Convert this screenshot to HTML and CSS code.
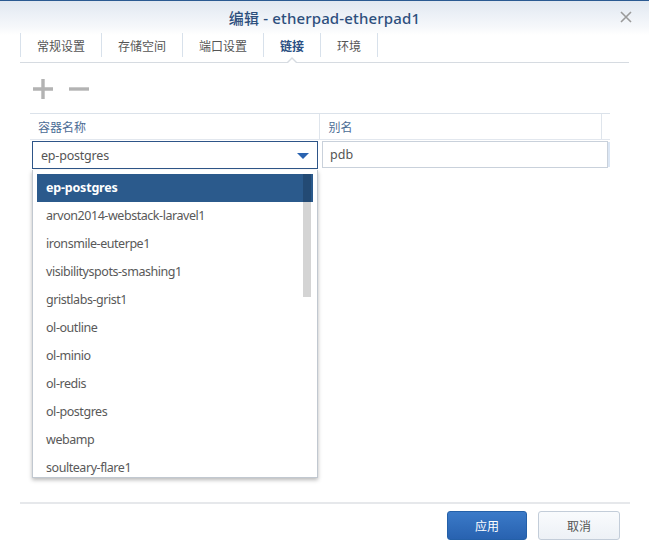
FILE: index.html
```html
<!DOCTYPE html>
<html lang="zh">
<head>
<meta charset="utf-8">
<title>编辑 - etherpad-etherpad1</title>
<link rel="stylesheet" href="styles.css">
</head>
<body>
<div class="window">
  <div class="header">
    <div class="title">编辑 - etherpad-etherpad1</div>
    <div class="close" aria-label="关闭">
      <svg width="12" height="12" viewBox="0 0 12 12"><path d="M1 1 L11 11 M11 1 L1 11" stroke="#9a9a9a" stroke-width="1.6" fill="none"/></svg>
    </div>
  </div>
  <div class="tabs">
    <div class="tab">常规设置</div>
    <div class="tab">存储空间</div>
    <div class="tab">端口设置</div>
    <div class="tab active">链接</div>
    <div class="tab">环境</div>
  </div>
  <div class="content">
    <div class="toolbar">
      <span class="tool">
        <svg width="20" height="20" viewBox="0 0 20 20"><path d="M10 0 V20 M0 10 H20" stroke="#b3b3b3" stroke-width="3.4" fill="none"/></svg>
      </span>
      <span class="tool">
        <svg width="20" height="20" viewBox="0 0 20 20"><path d="M0 10 H20" stroke="#b3b3b3" stroke-width="3.4" fill="none"/></svg>
      </span>
    </div>
    <div class="grid">
      <div class="grid-head">
        <div class="hcell c1">容器名称</div>
        <div class="hcell c2">别名</div>
        <div class="hcell c3"></div>
      </div>
      <div class="grid-row">
        <div class="cell c1">
          <div class="combo">
            <span class="combo-text">ep-postgres</span>
            <span class="combo-arrow"></span>
          </div>
          <div class="dropdown">
            <div class="item selected">ep-postgres</div>
            <div class="item">arvon2014-webstack-laravel1</div>
            <div class="item">ironsmile-euterpe1</div>
            <div class="item">visibilityspots-smashing1</div>
            <div class="item">gristlabs-grist1</div>
            <div class="item">ol-outline</div>
            <div class="item">ol-minio</div>
            <div class="item">ol-redis</div>
            <div class="item">ol-postgres</div>
            <div class="item">webamp</div>
            <div class="item">soulteary-flare1</div>
            <div class="scrollbar"></div>
          </div>
        </div>
        <div class="cell c2">
          <div class="textbox">pdb</div>
        </div>
      </div>
    </div>
  </div>
  <div class="footer">
    <button class="btn primary">应用</button>
    <button class="btn">取消</button>
  </div>
</div>
</body>
</html>
```

FILE: styles.css
```css
* { box-sizing: border-box; }
html, body {
  margin: 0;
  padding: 0;
  background: #ffffff;
}
body {
  font-family: "Noto Sans", "Noto Sans CJK SC", sans-serif;
  font-size: 12px;
  color: #505050;
}
.window {
  width: 649px;
  height: 547px;
  border-top: 1px solid #2b5a92;
  background: linear-gradient(#e1e8f1 0px, #f6f8fb 26px, #ffffff 34px, #ffffff 100%);
  display: flex;
  flex-direction: column;
}
.header {
  height: 32px;
  display: flex;
  align-items: center;
  justify-content: center;
  position: relative;
}
.title {
  font-size: 15px;
  font-weight: 500;
  color: #2d4f7d;
  padding-top: 1px;
  letter-spacing: 0.15px;
}
.close {
  position: absolute;
  right: 17px;
  top: 10px;
  width: 12px;
  height: 12px;
  display: flex;
}
.tabs {
  margin: 0 20px 0 20px;
  height: 30px;
  border-bottom: 1px solid #d6dbe1;
  display: flex;
  align-items: flex-start;
  position: relative;
}
.tab {
  height: 24px;
  line-height: 24px;
  padding: 2px 16px 0 16px;
  border-right: 1px solid #d8e1eb;
  color: #555555;
  font-size: 12px;
}
.tab:first-child { border-left: 1px solid #d8e1eb; padding-left: 16px; }
.tab.active {
  color: #2b5083;
  font-weight: 700;
  position: relative;
}
.tab.active::before {
  content: "";
  position: absolute;
  left: 50%;
  bottom: -6px;
  margin-left: -6px;
  border-left: 6px solid transparent;
  border-right: 6px solid transparent;
  border-bottom: 6px solid #d6dbe1;
}
.tab.active::after {
  content: "";
  position: absolute;
  left: 50%;
  bottom: -7px;
  margin-left: -5px;
  border-left: 5px solid transparent;
  border-right: 5px solid transparent;
  border-bottom: 5px solid #ffffff;
}
.content {
  flex: 1;
  padding: 0 29px 0 30px;
}
.toolbar {
  height: 50px;
  display: flex;
  align-items: center;
  gap: 16px;
  padding-left: 3px;
  padding-top: 1px;
}
.tool { display: flex; width: 20px; height: 20px; }
.grid { width: 590px; }
.grid-head {
  display: flex;
  height: 27px;
  border-top: 1px solid #dbe2ea;
  border-bottom: 1px solid #e2e7ee;
  width: 580px;
}
.grid-head .c3 { flex: 1; border-right: none; }
.hcell {
  line-height: 26px;
  padding-left: 8px;
  padding-top: 1px;
  color: #4c6c95;
  border-right: 1px solid #dfe5ec;
}
.hcell.c1 { width: 291px; }
.hcell.c2 { width: 282px; }
.grid-row {
  display: flex;
  padding-top: 1px;
}
.cell.c1 {
  width: 291px;
  padding-left: 2px;
  position: relative;
}
.cell.c2 {
  width: 288px;
  padding-left: 1px;
}
.combo {
  width: 286px;
  height: 28px;
  border: 1px solid #2e5588;
  display: flex;
  align-items: center;
  justify-content: space-between;
  padding: 0 8px 0 8px;
  background: #fff;
}
.combo-text { color: #555; font-size: 12.5px; letter-spacing: -0.2px; }
.combo-arrow {
  width: 0;
  height: 0;
  border-left: 6px solid transparent;
  border-right: 6px solid transparent;
  border-top: 6px solid #2a63b0;
  margin-top: 2px;
}
.textbox {
  width: 286px;
  height: 27px;
  border: 1px solid #c9d1db;
  box-shadow: 3px 0 0 -1px #dbe6f4;
  padding-left: 7px;
  line-height: 25px;
  font-size: 12.5px;
  color: #555;
  background: #fff;
}
.dropdown {
  position: absolute;
  left: 2px;
  top: 29px;
  width: 286px;
  height: 308px;
  background: #fff;
  border: 1px solid #c1c8d0;
  border-top: none;
  box-shadow: 0 2px 4px rgba(0, 0, 0, 0.28);
  padding: 4px 4px 0 4px;
  overflow: hidden;
  z-index: 5;
}
.item {
  height: 28px;
  line-height: 28px;
  padding-left: 9px;
  color: #595959;
  white-space: nowrap;
  font-size: 12.5px;
  letter-spacing: -0.45px;
}
.item.selected {
  background: #2b5a8c;
  color: #ffffff;
  font-weight: 700;
  letter-spacing: -0.2px;
}
.scrollbar {
  position: absolute;
  right: 6px;
  top: 4px;
  width: 8px;
  height: 123px;
  background: rgba(0, 0, 0, 0.17);
}
.footer {
  margin: 0 19px 0 20px;
  height: 45px;
  border-top: 2px solid #e6e8eb;
  display: flex;
  justify-content: flex-end;
  align-items: flex-start;
  padding-top: 7px;
  padding-right: 10px;
  gap: 11px;
}
.btn {
  height: 29px;
  border-radius: 3px;
  font-family: "Noto Sans CJK SC", sans-serif;
  font-size: 12px;
  border: 1px solid #c3cdd9;
  background: linear-gradient(#f9fbfd, #edf1f6);
  color: #555;
  width: 82px;
  padding: 0;
}
.btn.primary {
  width: 80px;
  border: 1px solid #2460a8;
  background: linear-gradient(#3b7ac8, #2862b0);
  color: #ffffff;
}
```
